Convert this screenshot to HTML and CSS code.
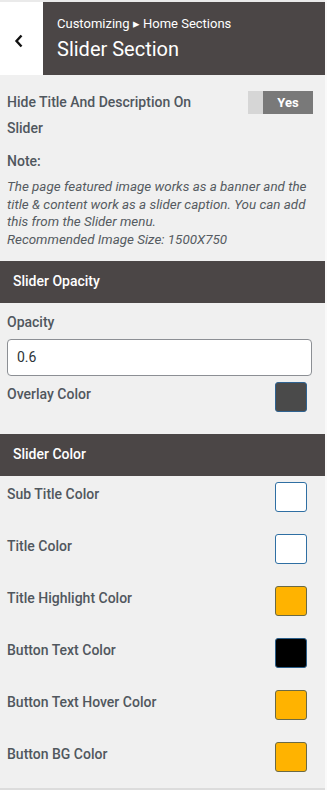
FILE: index.html
```html
<!DOCTYPE html>
<html>
<head>
<meta charset="utf-8">
<link rel="stylesheet" href="styles.css">
</head>
<body>
<div class="panel">
  <div class="header">
    <div class="back">
      <svg width="10" height="14" viewBox="0 0 10 14"><polyline points="7.5,1.5 2.5,7 7.5,12.5" fill="none" stroke="#111" stroke-width="2.4"/></svg>
    </div>
    <div class="titles">
      <div class="crumb">Customizing ▸ Home Sections</div>
      <div class="title">Slider Section</div>
    </div>
  </div>

  <div class="content first">
    <div class="toggle-row">
      <div class="label wrap">Hide Title And Description On Slider</div>
      <div class="toggle"><span class="t-off"></span><span class="t-on">Yes</span></div>
    </div>
    <div class="label note">Note:</div>
    <div class="desc">The page featured image works as a banner and the title &amp; content work as a slider caption. You can add this from the Slider menu.<br>Recommended Image Size: 1500X750</div>
  </div>

  <div class="band">Slider Opacity</div>
  <div class="content">
    <div class="label opacity">Opacity</div>
    <div class="input">0.6</div>
    <div class="color-row overlay">
      <div class="label">Overlay Color</div>
      <div class="swatch sw-dark"></div>
    </div>
  </div>

  <div class="band">Slider Color</div>
  <div class="content colors">
    <div class="color-row">
      <div class="label">Sub Title Color</div>
      <div class="swatch sw-white"></div>
    </div>
    <div class="color-row">
      <div class="label">Title Color</div>
      <div class="swatch sw-white"></div>
    </div>
    <div class="color-row">
      <div class="label">Title Highlight Color</div>
      <div class="swatch sw-orange"></div>
    </div>
    <div class="color-row">
      <div class="label">Button Text Color</div>
      <div class="swatch sw-black"></div>
    </div>
    <div class="color-row">
      <div class="label">Button Text Hover Color</div>
      <div class="swatch sw-orange"></div>
    </div>
    <div class="color-row">
      <div class="label">Button BG Color</div>
      <div class="swatch sw-orange"></div>
    </div>
  </div>
</div>
</body>
</html>
```

FILE: styles.css
```css
html, body {
  margin: 0;
  padding: 0;
  background: #fafafa;
}
body {
  font-family: Roboto, "Noto Sans", "Liberation Sans", sans-serif;
  color: #50575e;
}
.panel {
  width: 325px;
  height: 786px;
  background: #f0f0f0;
  border-top: 2px solid #eaeaea;
  border-bottom: 2px solid #dcdcdc;
  box-sizing: content-box;
}
.header {
  display: flex;
  height: 73px;
}
.back {
  width: 43px;
  background: #fff;
  display: flex;
  align-items: center;
  justify-content: center;
  padding-right: 5px;
  box-sizing: border-box;
}
.back svg { margin-top: 4px; }
.titles {
  flex: 1;
  background: #4b4646;
  color: #fff;
  padding: 13px 0 0 14px;
}
.crumb {
  font-size: 13px;
  line-height: 18px;
}
.title {
  font-size: 20px;
  line-height: 26px;
  margin-top: 3px;
}
.content {
  padding: 0 18px 0 7px;
}
.content.first {
  padding: 14px 12px 13px 7px;
}
.label {
  font-size: 14px;
  font-weight: 500;
  line-height: 24px;
  color: #50575e;
}
.toggle-row {
  display: flex;
  justify-content: space-between;
  align-items: flex-start;
}
.label.wrap {
  width: 215px;
  line-height: 26px;
}
.toggle {
  display: flex;
  height: 23px;
  margin-top: 2px;
}
.t-off {
  width: 15px;
  background: #d6d6d6;
}
.t-on {
  width: 50px;
  background: #797979;
  color: #fff;
  font-size: 13px;
  font-weight: 700;
  line-height: 23px;
  text-align: center;
}
.label.note {
  margin-top: 10px;
  line-height: 20px;
}
.desc {
  margin-top: 7px;
  font-size: 13.4px;
  font-style: italic;
  line-height: 17.5px;
  color: #555b61;
}
.band {
  background: #4b4646;
  color: #fff;
  font-size: 14px;
  font-weight: 500;
  height: 42px;
  line-height: 40px;
  padding-left: 13px;
}
.label.opacity {
  margin-top: 8px;
  line-height: 22px;
}
.input {
  margin: 6px -5px 0 0;
  height: 37px;
  box-sizing: border-box;
  background: #fff;
  border: 1px solid #8c8f94;
  border-radius: 4px;
  font-size: 14px;
  line-height: 35px;
  padding-left: 9px;
  color: #2c3338;
}
.color-row {
  display: flex;
  justify-content: space-between;
  align-items: flex-start;
}
.overlay {
  margin-top: 6px;
  padding-bottom: 22px;
}
.colors {
  padding-top: 6px;
}
.colors .color-row + .color-row {
  margin-top: 22px;
}
.swatch {
  width: 32px;
  height: 30px;
  box-sizing: border-box;
  border-radius: 3px;
  border: 1px solid #2271b1;
}
.sw-dark { background: #4a4a4a; border-color: #2f6391; }
.sw-white { background: #fff; border-color: #2f6fa3; }
.sw-orange { background: #ffb300; border-color: #6b6a45; }
.sw-black { background: #000; border-color: #2b5f8a; }
```
